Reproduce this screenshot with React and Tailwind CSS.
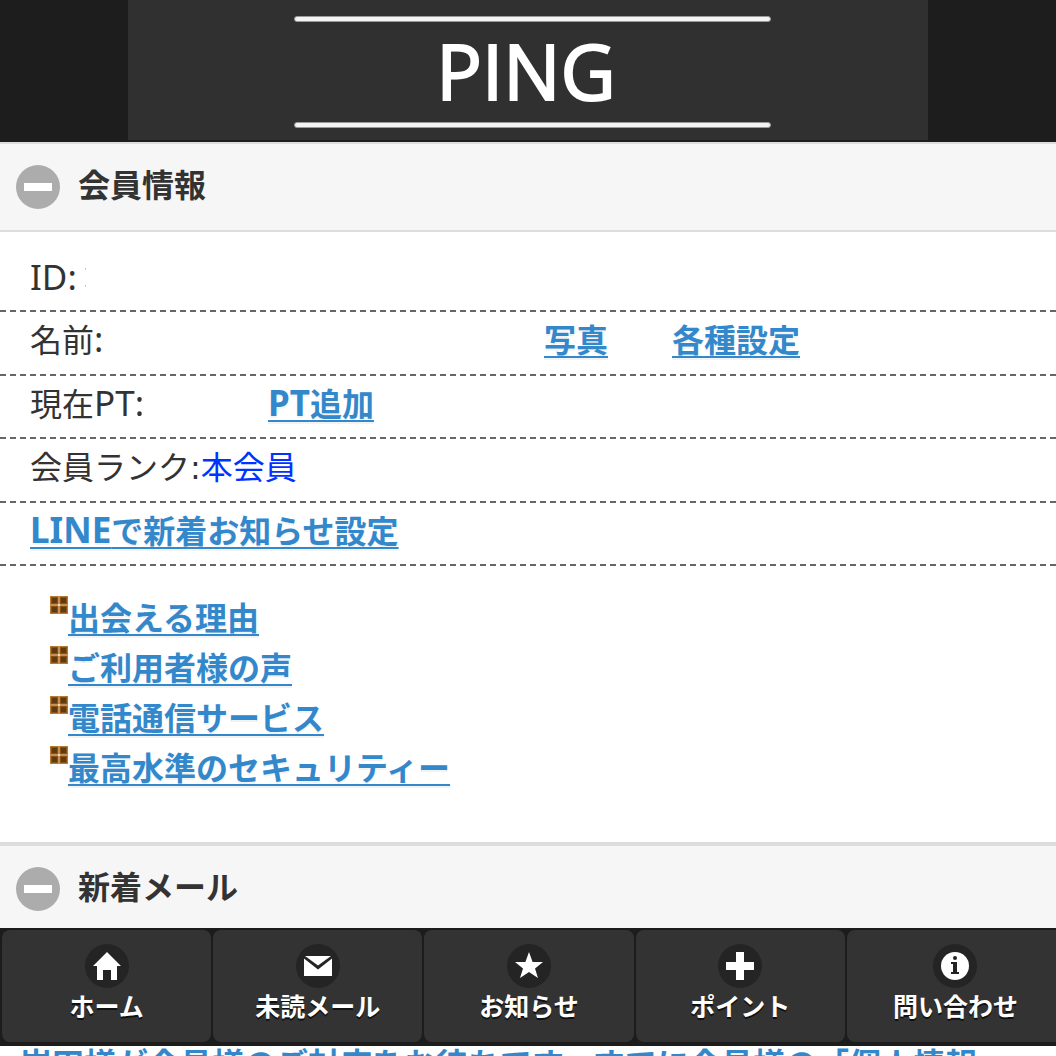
const rows = 'flex items-center border-b-2 border-dashed border-[#666] px-[30px] pb-1';
const link = 'font-bold text-[#3388cc] underline decoration-2 underline-offset-4 [text-shadow:0_2px_0_#f3f3f3]';

const reasons = ['出会える理由', 'ご利用者様の声', '電話通信サービス', '最高水準のセキュリティー'];

function HomeIcon() {
  return (
    <svg viewBox="0 0 28 28" className="size-7" fill="#fff">
      <path d="M14 0L0 14h4v14h6V18h8v10h6V14h4z" />
    </svg>
  );
}

function MailIcon() {
  return (
    <svg viewBox="0 0 28 28" className="size-7" fill="#fff">
      <path d="M1 4h26L14 13.500zM0 6.500l14 11 14-11V24H0z" />
    </svg>
  );
}

function StarIcon() {
  return (
    <svg viewBox="0 0 28 28" className="size-7" fill="#fff">
      <path d="M14 0l3.600 10H28l-8 6.500 3 9.500L14 20 5 26l3-9.500L0 10h10.400z" />
    </svg>
  );
}

function PlusIcon() {
  return (
    <svg viewBox="0 0 28 28" className="size-7" fill="#fff">
      <path d="M10 0h8v10h10v8H18v10h-8V18H0v-8h10z" />
    </svg>
  );
}

function InfoIcon() {
  return (
    <svg viewBox="0 0 28 28" className="size-7">
      <circle cx="14" cy="14" r="14" fill="#fff" />
      <circle cx="14" cy="6" r="2" fill="#242424" />
      <path d="M10 10h6v10h2v2h-8v-2h2v-8h-2z" fill="#242424" />
    </svg>
  );
}

function ListIcon() {
  return (
    <svg viewBox="0 0 18 18" className="size-[18px] shrink-0">
      <rect width="18" height="18" fill="#b87830" />
      <path d="M8 0h2v18H8zM0 8h18v2H0z" fill="#c89050" />
      <path d="M8 8h2v2H8z" fill="#f0dcc0" />
      <path d="M1 1h7v7H1zM10 1h7v7h-7zM1 10h7v7H1zM10 10h7v7h-7z" fill="#8a5318" />
      <path d="M2 2h5v5H2zM11 2h5v5h-5zM2 11h5v5H2zM11 11h5v5h-5z" fill="#5f3a10" />
    </svg>
  );
}

const tabs = [
  { label: 'ホーム', Icon: HomeIcon },
  { label: '未読メール', Icon: MailIcon },
  { label: 'お知らせ', Icon: StarIcon },
  { label: 'ポイント', Icon: PlusIcon },
  { label: '問い合わせ', Icon: InfoIcon },
];

// Latin letters are set a little larger than the kana around them
function Latin({ children }) {
  return <span className="font-['Noto_Sans',sans-serif] text-[35px] leading-8">{children}</span>;
}

function SectionHeading({ title }) {
  return (
    <h2 className="border-y-2 border-[#ddd] bg-[#f6f6f6]">
      <button
        type="button"
        aria-expanded="true"
        className="flex h-[86px] w-full items-center gap-[18px] px-4 text-left font-bold"
      >
        <span className="flex size-11 items-center justify-center rounded-full bg-[#acacac]">
          <span className="h-2 w-7 bg-white" />
        </span>
        <span className="pb-0.5">{title}</span>
      </button>
    </h2>
  );
}

function Banner() {
  return (
    <header className="bg-[#1d1d1d] pb-0.5">
      <div className="mx-auto flex h-[140px] max-w-[800px] flex-col items-center bg-[#303030] pt-4 pl-2">
        <div className="h-[6px] w-[477px] rounded-full border border-[#999] bg-[#f4f4f4]" />
        <h1 className="flex h-[100px] items-center pr-3 pb-0.5 font-['Open_Sans',sans-serif] text-[76px] leading-[98px] text-white [-webkit-text-stroke:2px_#fff]">
          PING
        </h1>
        <div className="h-[6px] w-[477px] rounded-full border border-[#999] bg-[#f4f4f4]" />
      </div>
    </header>
  );
}

function TabBar() {
  return (
    <nav className="absolute inset-x-0 bottom-[10px] overflow-hidden bg-[#1c1c1c] pt-0.5 pb-1 pl-0.5">
      <ul className="grid grid-cols-5 gap-0.5">
        {tabs.map(({ label, Icon }) => (
          <li key={label} className="last:-mr-2">
            <a
              href="#"
              className="flex h-28 flex-col items-center rounded-lg bg-[#333] pt-[14px] text-[25px] leading-10 font-bold text-white [text-shadow:0_2px_0_#111]"
            >
              <span className="flex size-11 items-center justify-center rounded-full bg-[#242424]">
                <Icon />
              </span>
              {label}
            </a>
          </li>
        ))}
      </ul>
    </nav>
  );
}

export default function App() {
  return (
    <div className="relative h-screen overflow-hidden bg-white font-['DejaVu_Sans','Noto_Sans_CJK_JP',sans-serif] text-[32px] leading-[42px] text-[#333]">
      <Banner />
      <main>
        <SectionHeading title="会員情報" />
        <section className="pt-4">
          <div className={`${rows} h-16`}>
            <Latin>ID:</Latin>
            <span className="ml-2 flex h-5 w-px flex-col justify-between pt-px">
              <span className="h-0.5 bg-[#b8c8ff]" />
              <span className="h-0.5 bg-[#b8c8ff]" />
            </span>
          </div>
          <div className={`${rows} h-16`}>
            <span className="w-[514px]">名前<Latin>:</Latin></span>
            <a href="#" className={`${link} mr-16`}>写真</a>
            <a href="#" className={link}>各種設定</a>
          </div>
          <div className={`${rows} h-[63px]`}>
            <span className="w-[238px]">現在<Latin>PT:</Latin></span>
            <a href="#" className={link}><Latin>PT</Latin>追加</a>
          </div>
          <div className={`${rows} h-16`}>
            会員ランク:<span className="text-[#0033ff]">本会員</span>
          </div>
          <div className={`${rows} h-[63px]`}>
            <a href="#" className={link}><Latin>LINE</Latin>で新着お知らせ設定</a>
          </div>
          <ul className="pt-[30px] pb-[46px] pl-[50px]">
            {reasons.map((reason) => (
              <li key={reason} className="flex h-[50px] items-start">
                <ListIcon />
                <a href="#" className={`${link} pt-0.5`}>{reason}</a>
              </li>
            ))}
          </ul>
        </section>
        <div className="border-t-2 border-[#ddd]">
          <SectionHeading title="新着メール" />
          <p className="mt-[110px] px-5 whitespace-nowrap">
            <a href="#" className={link}>岩田様が会員様のご対応をお待ちです。すでに会員様の「個人情報」</a>
          </p>
        </div>
      </main>
      <TabBar />
    </div>
  );
}
